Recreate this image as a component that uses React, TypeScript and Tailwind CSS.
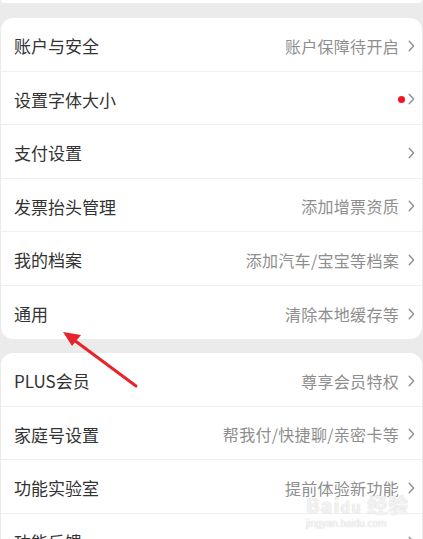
import React from 'react';

type Row = { label: string; value?: string; dot?: boolean };

const groupA: Row[] = [
  { label: '账户与安全', value: '账户保障待开启' },
  { label: '设置字体大小', dot: true },
  { label: '支付设置' },
  { label: '发票抬头管理', value: '添加增票资质' },
  { label: '我的档案', value: '添加汽车/宝宝等档案' },
  { label: '通用', value: '清除本地缓存等' },
];

const groupB: Row[] = [
  { label: 'PLUS会员', value: '尊享会员特权' },
  { label: '家庭号设置', value: '帮我付/快捷聊/亲密卡等' },
  { label: '功能实验室', value: '提前体验新功能' },
  { label: '功能反馈' },
];

const Chevron = () => (
  <svg width="7" height="12" viewBox="0 0 7 12" className="ml-[9px] shrink-0">
    <path d="M1.2 1.2 L5.6 6 L1.2 10.8" fill="none" stroke="#8c8c8c" strokeWidth="1.3" strokeLinecap="round" strokeLinejoin="round" />
  </svg>
);

const SettingRow = ({ row, last }: { row: Row; last: boolean }) => (
  <div className={`flex items-center h-[53.5px] pl-[13px] pr-[7px] pt-[3px] ${last ? '' : 'border-b border-[#f0f0f0]'}`}>
    <span className="flex-1 text-[17px] text-[#333333]">{row.label}</span>
    {row.value && <span className="text-[16px] text-[#8e8e8e] tracking-[0.3px]">{row.value}</span>}
    {row.dot && <span className="w-[7px] h-[7px] rounded-full bg-[#f3141d] -mr-[6px]" />}
    <Chevron />
  </div>
);

export default function App() {
  return (
    <div
      className="relative w-[423px] h-[539px] overflow-hidden bg-[#ebebeb]"
      style={{ fontFamily: '"Noto Sans CJK SC", "Noto Sans", sans-serif' }}
    >
      {/* tail of the previous card */}
      <div className="h-[3px] mx-[1px] bg-white rounded-b-[12px]" />

      <div className="mt-[15px] mx-[1px] bg-white rounded-[12px] overflow-hidden">
        {groupA.map((r, i) => (
          <SettingRow key={r.label} row={r} last={i === groupA.length - 1} />
        ))}
      </div>

      <div className="mt-[14px] mx-[1px] bg-white rounded-[12px] overflow-hidden">
        {groupB.map((r, i) => (
          <SettingRow key={r.label} row={r} last={i === groupB.length - 1} />
        ))}
      </div>

      {/* annotation arrow */}
      <svg className="absolute left-0 top-0 pointer-events-none" width="423" height="539">
        <line x1="136" y1="386" x2="74" y2="340" stroke="#e8232b" strokeWidth="3" strokeLinecap="round" />
        <polygon points="63,332 81,335 72,346" fill="#e8232b" />
      </svg>

      {/* watermark */}
      <div className="absolute left-[306px] top-[495px] leading-none text-white/80 pointer-events-none" style={{ textShadow: '0 0 1px #bbbbbb' }}>
        <div className="text-[20px] font-bold tracking-[1px]">
          Bai<span className="text-[15px]">du</span> 经验
        </div>
        <div className="text-[10px] mt-[4px]" style={{ fontFamily: '"Liberation Sans", sans-serif' }}>jingyan.baidu.com</div>
      </div>
    </div>
  );
}
